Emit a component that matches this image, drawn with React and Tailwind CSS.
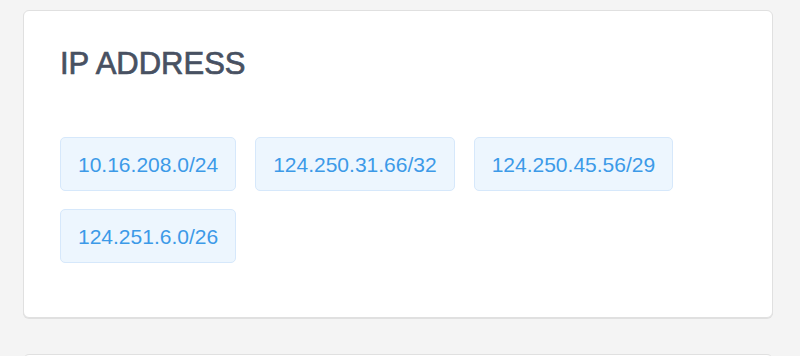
export default function App() {
  const ips = ["10.16.208.0/24", "124.250.31.66/32", "124.250.45.56/29", "124.251.6.0/26"];
  return (
    <div className="min-h-[356px] h-[356px] overflow-hidden bg-[#f4f4f4] pl-[23px] pr-[27px] pt-[10px]" style={{ fontFamily: '"Liberation Sans", Arial, sans-serif' }}>
      <div className="rounded-[6px] border border-[#e0e0e0] bg-white pl-[36px] pr-[36px] pt-[38px] pb-[54px] shadow-[0_1px_0_#e0e0e0]">
        <h2 className="text-[31px] leading-[30px] font-normal text-[#485162] [-webkit-text-stroke:0.7px_#485162]">IP ADDRESS</h2>
        <div className="mt-[58px] flex flex-wrap gap-x-[19px] gap-y-[18px]">
          {ips.map((ip) => (
            <div key={ip} className="flex h-[54px] items-center rounded-[5px] border border-[#d6e8fb] bg-[#edf6fe] px-[17px] text-[21px] leading-none text-[#3c9ae8]">
              {ip}
            </div>
          ))}
        </div>
      </div>
      <div className="mt-[36px] h-[100px] rounded-[6px] border border-[#e0e0e0] bg-white"></div>
    </div>
  );
}
